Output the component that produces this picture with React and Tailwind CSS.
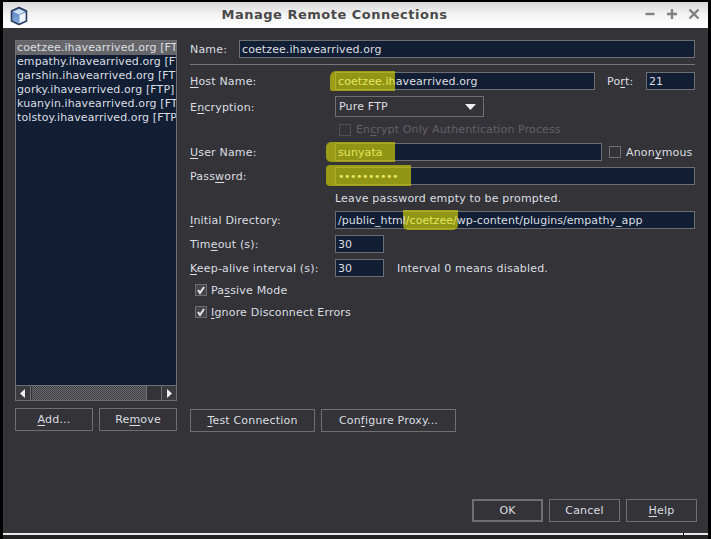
function U({ children }) {
  return <span className="underline underline-offset-2 decoration-1">{children}</span>;
}
function Label({ children, className = "" }) {
  return <span className={"text-[11px] tracking-[0.18px] text-[#dcdfe3] whitespace-nowrap " + className}>{children}</span>;
}
function Hi({ children }) {
  return <span className="text-[#e6e65c]">{children}</span>;
}
function Field({ value, className = "", mark = null, textClass = "tracking-[0.1px]" }) {
  return (
    <div className={"relative h-[18px] bg-[#111e33] border border-[#6f6f72] flex items-center pl-[2px] pt-[1px] " + className}>
      {mark}
      <span className={"relative text-[11px] text-[#dcdfe3] whitespace-nowrap " + textClass}>{value}</span>
    </div>
  );
}
function Mark({ className = "" }) {
  return <div className={"absolute bg-[#c8c80a]/70 " + className} />;
}
function Check({ checked, disabled, className = "" }) {
  return (
    <span className={"w-[12px] h-[12px] shrink-0 border flex items-center justify-center " + (disabled ? "border-[#505053] " : "border-[#6f6f72] ") + (checked ? "bg-[#45454a] " : "") + className}>
      {checked && (
        <svg width="10" height="10" viewBox="0 0 10 10"><path d="M2 5 L4 8 L8 2" fill="none" stroke="#e6e6e6" strokeWidth="2" /></svg>
      )}
    </span>
  );
}
function Btn({ children, className = "" }) {
  return (
    <div className={"h-[23px] border border-[#6f6f72] flex items-center justify-center text-[11px] tracking-[0.18px] text-[#dcdfe3] whitespace-nowrap " + className}>
      {children}
    </div>
  );
}
const items = [
  "coetzee.ihavearrived.org [FTP]",
  "empathy.ihavearrived.org [FTP]",
  "garshin.ihavearrived.org [FTP]",
  "gorky.ihavearrived.org [FTP]",
  "kuanyin.ihavearrived.org [FTP]",
  "tolstoy.ihavearrived.org [FTP]",
];
export default function App() {
  return (
    <div className="w-[711px] h-[539px] bg-black pt-[2px] pl-[3px] pr-[3px] flex flex-col leading-[14px]" style={{ fontFamily: '"DejaVu Sans", sans-serif' }}>
      <div className="h-[26px] shrink-0 bg-gradient-to-b from-[#d8d8d8] via-[#f4f4f4] to-white flex items-center relative">
        <svg className="absolute left-[6px] top-[4px]" width="20" height="20" viewBox="0 0 20 20">
          <defs>
            <linearGradient id="left" x1="0" y1="0" x2="0" y2="1">
              <stop offset="0" stopColor="#4f7fbd" />
              <stop offset="1" stopColor="#86aedd" />
            </linearGradient>
          </defs>
          <path d="M10 1.5 L17.5 5 L17.5 15 L10 18.5 L2.5 15 L2.5 5 Z" fill="url(#left)" stroke="#2c3e5f" strokeWidth="1.6" strokeLinejoin="round" />
          <path d="M10 3 L16 5.5 L10 8.5 L4 5.5 Z" fill="#cfe0f2" />
          <path d="M10.5 9 L16.5 6.5 L16.5 14.5 L10.5 17 Z" fill="#edf3f9" />
        </svg>
        <div className="w-full text-center text-[13px] font-bold tracking-[0.5px] text-[#4a4a4a] pr-[42px]">Manage Remote Connections</div>
        <div className="absolute right-[3px] top-[3px] flex">
          <svg width="22" height="18" viewBox="0 0 22 18"><path d="M6.5 9 H15.5" stroke="#808080" strokeWidth="2.4" /></svg>
          <svg width="22" height="18" viewBox="0 0 22 18"><path d="M6 9 H16 M11 4 V14" stroke="#808080" strokeWidth="2.4" /></svg>
          <svg width="22" height="18" viewBox="0 0 22 18"><path d="M6.5 4.5 L15.5 13.5 M15.5 4.5 L6.5 13.5" stroke="#808080" strokeWidth="2.4" /></svg>
        </div>
      </div>

      <div className="flex-1 bg-[#333338] flex flex-col pl-[12px] pr-[11px] pt-[12px]">
        <div className="flex-1 flex gap-[13px]">
          <div className="w-[162px] shrink-0 flex flex-col">
            <div className="h-[361px] border border-[#6f6f72] bg-[#111e33] flex flex-col overflow-hidden">
              <div className="flex-1 overflow-hidden">
                {items.map((t, i) => (
                  <div key={t} className={"h-[14px] text-[11px] tracking-[0.1px] whitespace-nowrap pl-[1px] text-[#dcdfe3] " + (i === 0 ? "bg-[#66666a]" : "")}>{t}</div>
                ))}
              </div>
              <div className="h-[15px] flex shrink-0 bg-[#333338] border-t border-[#6f6f72]">
                <div className="w-[15px] bg-[#3a3a3f] flex items-center justify-center border-r border-[#6f6f72]">
                  <svg width="7" height="9" viewBox="0 0 7 9"><path d="M5 0 V9 L0 4.5 Z" fill="#eee" /></svg>
                </div>
                <div className="w-[115px] border-r border-[#6f6f72] bg-[repeating-conic-gradient(#6a6a6e_0_25%,#3f3f44_0_50%)] bg-[length:2px_2px] ml-[1px]" />
                <div className="flex-1" />
                <div className="w-[15px] bg-[#3a3a3f] flex items-center justify-center border-l border-[#6f6f72]">
                  <svg width="7" height="9" viewBox="0 0 7 9"><path d="M1 0 V9 L6 4.5 Z" fill="#eee" /></svg>
                </div>
              </div>
            </div>
            <div className="flex gap-[6px] mt-[7px]">
              <Btn className="w-[78px]"><span><U>A</U>dd...</span></Btn>
              <Btn className="w-[78px]"><span>Re<U>m</U>ove</span></Btn>
            </div>
          </div>

          <div className="w-[505px] flex flex-col">
            <div className="flex items-center h-[18px]">
              <div className="w-[49px] shrink-0"><Label>Name:</Label></div>
              <Field value="coetzee.ihavearrived.org" className="flex-1" />
            </div>
            <div className="h-px bg-[#77777a] mt-[6px] mb-[7px]" />
            <div className="flex items-center">
              <div className="w-[145px] shrink-0"><Label><U>H</U>ost Name:</Label></div>
              <Field
                value={<><Hi>coetzee.ih</Hi>avearrived.org</>}
                className="w-[260px]"
                mark={<Mark className="left-[-6px] top-[-2px] w-[65px] h-[20px] rounded-tl-[6px] rounded-bl-[2px]" />}
              />
              <Label className="ml-[12px] mt-[2px]">Po<U>r</U>t:</Label>
              <Field value="21" className="w-[49px] ml-auto" />
            </div>
            <div className="flex items-center mt-[6px]">
              <div className="w-[145px] shrink-0"><Label>E<U>n</U>cryption:</Label></div>
              <div className="w-[149px] h-[21px] border border-[#6f6f72] flex items-center justify-between pl-[3px] pr-[7px]">
                <span className="text-[11px] tracking-[0.18px] text-[#dcdfe3]">Pure FTP</span>
                <svg width="11" height="6" viewBox="0 0 11 6"><path d="M0 0 H11 L5.5 6 Z" fill="#eee" /></svg>
              </div>
            </div>
            <div className="flex items-center mt-[7px] ml-[149px] h-[12px]">
              <Check disabled />
              <span className="ml-[5px] text-[11px] tracking-[0.12px] text-[#626266] whitespace-nowrap">En<U>c</U>rypt Only Authentication Process</span>
            </div>
            <div className="flex items-center mt-[7px]">
              <div className="w-[145px] shrink-0"><Label><U>U</U>ser Name:</Label></div>
              <Field
                value={<Hi>sunyata</Hi>}
                className="w-[267px]"
                mark={<Mark className="left-[-10px] top-[-2px] w-[69px] h-[20px] rounded-l-[5px]" />}
              />
              <Check className="ml-[7px]" />
              <Label className="ml-[5px] mt-[2px]">Anon<U>y</U>mous</Label>
            </div>
            <div className="flex items-center mt-[6px]">
              <div className="w-[145px] shrink-0"><Label>Pass<U>w</U>ord:</Label></div>
              <Field
                value={<Hi>••••••••••</Hi>}
                textClass="tracking-[-0.5px]"
                className="flex-1"
                mark={<Mark className="left-[-10px] top-[-3px] w-[85px] h-[21px] rounded-l-[4px]" />}
              />
            </div>
            <div className="ml-[145px] mt-[7px] h-[13px] flex items-center">
              <Label>Leave password empty to be prompted.</Label>
            </div>
            <div className="flex items-center mt-[6px]">
              <div className="w-[145px] shrink-0"><Label><U>I</U>nitial Directory:</Label></div>
              <Field
                value={<>/public_html<Hi>/coetzee/</Hi>wp-content/plugins/empathy_app</>}
                textClass="tracking-[0.04px]"
                className="flex-1"
                mark={<Mark className="left-[67px] top-[-2px] w-[55px] h-[20px] rounded-b-[5px]" />}
              />
            </div>
            <div className="flex items-center mt-[6px]">
              <div className="w-[145px] shrink-0"><Label>Tim<U>e</U>out (s):</Label></div>
              <Field value="30" className="w-[49px]" />
            </div>
            <div className="flex items-center mt-[6px]">
              <div className="w-[145px] shrink-0"><Label><U>K</U>eep-alive interval (s):</Label></div>
              <Field value="30" className="w-[49px]" />
              <Label className="ml-[13px] mt-[2px]">Interval 0 means disabled.</Label>
            </div>
            <div className="flex items-center mt-[7px] ml-[5px] h-[12px]">
              <Check checked />
              <Label className="ml-[4px] mt-[2px]">Pa<U>s</U>sive Mode</Label>
            </div>
            <div className="flex items-center mt-[10px] ml-[5px] h-[12px]">
              <Check checked />
              <Label className="ml-[4px] mt-[2px]"><U>I</U>gnore Disconnect Errors</Label>
            </div>
            <div className="flex-1" />
            <div className="flex gap-[6px] mb-[67px]">
              <Btn className="w-[125px]"><span><U>T</U>est Connection</span></Btn>
              <Btn className="w-[135px]"><span>Con<U>f</U>igure Proxy...</span></Btn>
            </div>
          </div>
        </div>

        <div className="flex justify-end gap-[6px] mb-[11px]">
          <Btn className="w-[71px] border-2"><span>OK</span></Btn>
          <Btn className="w-[71px]"><span>Cancel</span></Btn>
          <Btn className="w-[71px]"><span><U>H</U>elp</span></Btn>
        </div>
      </div>
      <div className="h-[2px] shrink-0 flex gap-px">
        <div className="w-[680px] bg-[#e8e8e8]" />
        <div className="flex-1 bg-[#e8e8e8]" />
      </div>
      <div className="h-[4px] bg-[#222] shrink-0" />
    </div>
  );
}
